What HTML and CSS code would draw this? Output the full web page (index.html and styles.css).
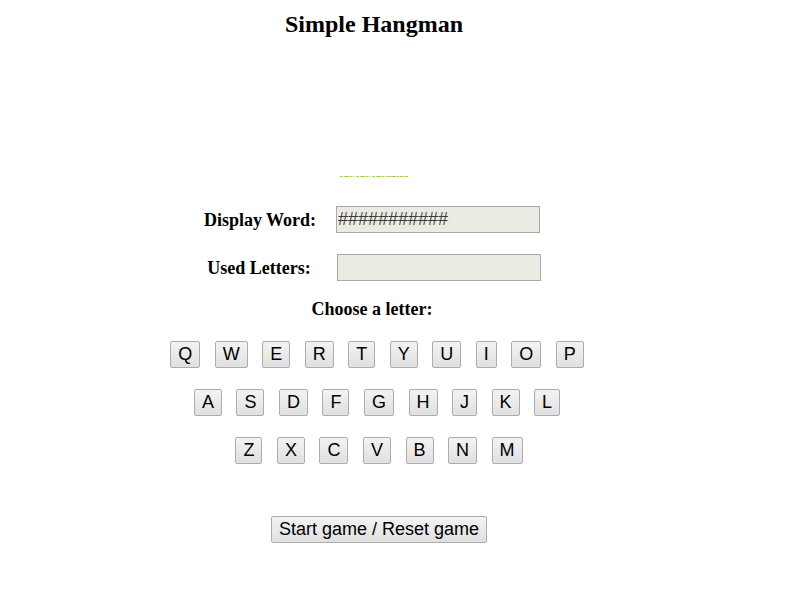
FILE: index.html
```html
<!DOCTYPE html>
<html>
<head>
<meta charset="utf-8">
<title>Simple Hangman</title>
<link rel="stylesheet" href="styles.css">
</head>
<body>
<div class="page">
  <h1 class="title">Simple Hangman</h1>
  <div class="gallows">
    <svg class="ground" width="68" height="4" viewBox="0 0 68 4">
      <path d="M0 2.5H14M16 2.5H30M32 2.5H46M47 2.5H68" stroke="#96d83a" stroke-width="1" stroke-dasharray="3 1 5 1 2 1" fill="none"/>
    </svg>
  </div>
  <div class="fields">
    <label class="field-label" for="word">Display Word:</label>
    <input class="field-input" id="word" type="text" value="###########" readonly>
    <label class="field-label" for="used">Used Letters:</label>
    <input class="field-input" id="used" type="text" value="" readonly>
  </div>
  <div class="choose">Choose a letter:</div>
  <div class="keyboard">
    <div class="key-row">
      <button class="key">Q</button><button class="key">W</button><button class="key">E</button><button class="key">R</button><button class="key">T</button><button class="key">Y</button><button class="key">U</button><button class="key">I</button><button class="key">O</button><button class="key">P</button>
    </div>
    <div class="key-row">
      <button class="key">A</button><button class="key">S</button><button class="key">D</button><button class="key">F</button><button class="key">G</button><button class="key">H</button><button class="key">J</button><button class="key">K</button><button class="key">L</button>
    </div>
    <div class="key-row row-last">
      <button class="key">Z</button><button class="key">X</button><button class="key">C</button><button class="key">V</button><button class="key">B</button><button class="key">N</button><button class="key">M</button>
    </div>
  </div>
  <div class="actions">
    <button class="key start">Start game / Reset game</button>
  </div>
</div>
</body>
</html>
```

FILE: styles.css
```css
html, body {
  margin: 0;
  padding: 0;
  background: #ffffff;
}

.page {
  width: 752px;
  display: flex;
  flex-direction: column;
  align-items: center;
  font-family: "Liberation Serif", "Times New Roman", serif;
  color: #000;
}

.title {
  margin: 10px 0 0 0;
  font-size: 24px;
  line-height: 28px;
  font-weight: bold;
  margin-left: -4px;
}

.gallows {
  height: 152px;
  width: 100%;
  box-sizing: border-box;
  display: flex;
  justify-content: center;
  align-items: flex-end;
  padding-bottom: 12px;
  padding-right: 5px;
}

.ground {
  display: block;
}

.fields {
  margin-top: 16px;
  display: grid;
  grid-template-columns: 150px 204px;
  column-gap: 1px;
  row-gap: 21px;
  align-items: center;
  align-self: flex-start;
  margin-left: 185px;
}

.field-label {
  font-size: 18px;
  font-weight: bold;
  text-align: center;
  line-height: 22px;
}

.fields .field-label:nth-child(3) {
  margin-left: -2px;
}

.field-input {
  box-sizing: border-box;
  width: 204px;
  height: 27px;
  margin: 0;
  padding: 0 1px;
  border: 1px solid #a9a9a9;
  background: #ebeae3;
  font-family: "Liberation Sans", Arial, sans-serif;
  font-size: 18px;
  color: #3a3a3a;
  outline: none;
}

.fields .field-input:last-child {
  margin-left: 1px;
}

.choose {
  margin-top: 17px;
  font-size: 18px;
  font-weight: bold;
  line-height: 22px;
  margin-left: -8px;
}

.keyboard {
  margin-top: 21px;
  display: flex;
  flex-direction: column;
  gap: 21px;
  padding-left: 2px;
}

.key-row {
  display: flex;
  justify-content: center;
  gap: 14.5px;
}

.row-last {
  padding-left: 4px;
}

.key {
  font-family: "Liberation Sans", Arial, sans-serif;
  font-size: 18px;
  line-height: 21px;
  padding: 2px 7px;
  margin: 0;
  border: 1px solid #acacac;
  border-radius: 2px;
  background: linear-gradient(#f3f3f3, #e0e0e0);
  color: #000;
  cursor: pointer;
}

.actions {
  margin-top: 52px;
  padding-left: 6px;
}
```
